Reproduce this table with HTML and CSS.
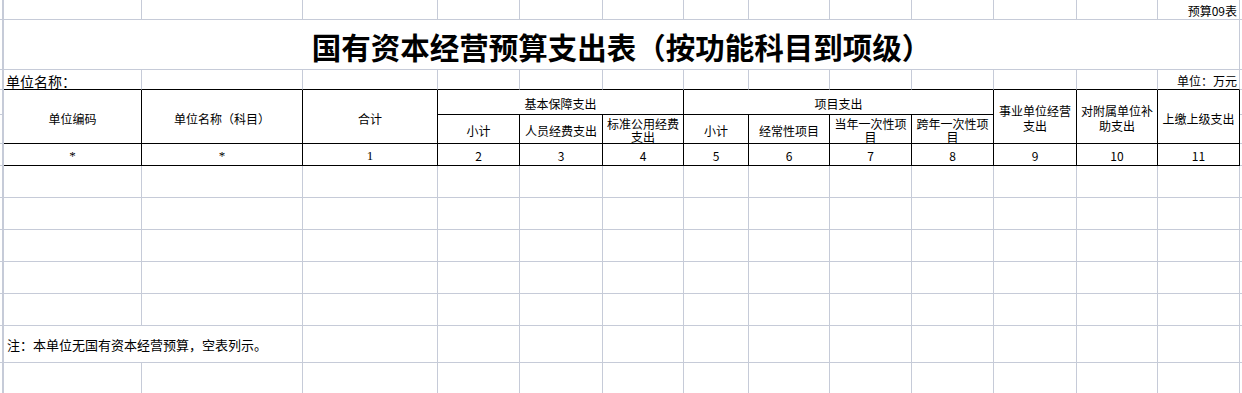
FILE: index.html
```html
<!DOCTYPE html>
<html lang="zh-CN">
<head>
<meta charset="utf-8">
<title>国有资本经营预算支出表（按功能科目到项级）</title>
<link rel="stylesheet" href="styles.css">
</head>
<body>
<div class="sheet">
  <!-- row 1 -->
  <div class="c e"></div>
  <div class="c"></div><div class="c"></div><div class="c"></div><div class="c"></div>
  <div class="c"></div><div class="c"></div><div class="c"></div><div class="c"></div>
  <div class="c"></div><div class="c"></div><div class="c"></div><div class="c"></div>
  <div class="c bot right">预算09表</div>
  <div class="c t"></div>

  <!-- row 2: title -->
  <div class="c e"></div>
  <div class="c title cs13">国有资本经营预算支出表（按功能科目到项级）</div>
  <div class="c t"></div>

  <!-- row 3 -->
  <div class="c e"></div>
  <div class="c ub bot left unitname">单位名称：</div>
  <div class="c ub"></div><div class="c ub"></div><div class="c ub"></div><div class="c ub"></div>
  <div class="c ub"></div><div class="c ub"></div><div class="c ub"></div><div class="c ub"></div>
  <div class="c ub"></div><div class="c ub"></div><div class="c ub"></div>
  <div class="c ub bot right">单位：万元</div>
  <div class="c t"></div>

  <!-- row 4: header A -->
  <div class="c e"></div>
  <div class="c h rs2">单位编码</div>
  <div class="c h rs2">单位名称（科目）</div>
  <div class="c h rs2">合计</div>
  <div class="c h cs3">基本保障支出</div>
  <div class="c h cs4">项目支出</div>
  <div class="c h rs2">事业单位经营支出</div>
  <div class="c h rs2">对附属单位补助支出</div>
  <div class="c h rs2">上缴上级支出</div>
  <div class="c t"></div>

  <!-- row 5: header B -->
  <div class="c e"></div>
  <div class="c h">小计</div>
  <div class="c h">人员经费支出</div>
  <div class="c h wrap2">标准公用经费支出</div>
  <div class="c h">小计</div>
  <div class="c h">经常性项目</div>
  <div class="c h wrap2">当年一次性项目</div>
  <div class="c h wrap2">跨年一次性项目</div>
  <div class="c t"></div>

  <!-- row 6: numbers -->
  <div class="c e"></div>
  <div class="c h n serif">*</div>
  <div class="c h n serif">*</div>
  <div class="c h n serif">1</div>
  <div class="c h n">2</div>
  <div class="c h n">3</div>
  <div class="c h n">4</div>
  <div class="c h n">5</div>
  <div class="c h n">6</div>
  <div class="c h n">7</div>
  <div class="c h n">8</div>
  <div class="c h n">9</div>
  <div class="c h n">10</div>
  <div class="c h n">11</div>
  <div class="c t"></div>

  <!-- rows 7-11: empty -->
  <div class="c e"></div>
  <div class="c"></div><div class="c"></div><div class="c"></div><div class="c"></div><div class="c"></div>
  <div class="c"></div><div class="c"></div><div class="c"></div><div class="c"></div><div class="c"></div>
  <div class="c"></div><div class="c"></div><div class="c"></div>
  <div class="c t"></div>

  <div class="c e"></div>
  <div class="c"></div><div class="c"></div><div class="c"></div><div class="c"></div><div class="c"></div>
  <div class="c"></div><div class="c"></div><div class="c"></div><div class="c"></div><div class="c"></div>
  <div class="c"></div><div class="c"></div><div class="c"></div>
  <div class="c t"></div>

  <div class="c e"></div>
  <div class="c"></div><div class="c"></div><div class="c"></div><div class="c"></div><div class="c"></div>
  <div class="c"></div><div class="c"></div><div class="c"></div><div class="c"></div><div class="c"></div>
  <div class="c"></div><div class="c"></div><div class="c"></div>
  <div class="c t"></div>

  <div class="c e"></div>
  <div class="c"></div><div class="c"></div><div class="c"></div><div class="c"></div><div class="c"></div>
  <div class="c"></div><div class="c"></div><div class="c"></div><div class="c"></div><div class="c"></div>
  <div class="c"></div><div class="c"></div><div class="c"></div>
  <div class="c t"></div>

  <div class="c e"></div>
  <div class="c"></div><div class="c"></div><div class="c"></div><div class="c"></div><div class="c"></div>
  <div class="c"></div><div class="c"></div><div class="c"></div><div class="c"></div><div class="c"></div>
  <div class="c"></div><div class="c"></div><div class="c"></div>
  <div class="c t"></div>

  <!-- row 12: note -->
  <div class="c e"></div>
  <div class="c cs2 left note">注：本单位无国有资本经营预算，空表列示。</div>
  <div class="c"></div><div class="c"></div><div class="c"></div><div class="c"></div><div class="c"></div>
  <div class="c"></div><div class="c"></div><div class="c"></div><div class="c"></div><div class="c"></div>
  <div class="c"></div>
  <div class="c t"></div>

  <!-- row 13 -->
  <div class="c e"></div>
  <div class="c"></div><div class="c"></div><div class="c"></div><div class="c"></div><div class="c"></div>
  <div class="c"></div><div class="c"></div><div class="c"></div><div class="c"></div><div class="c"></div>
  <div class="c"></div><div class="c"></div><div class="c"></div>
  <div class="c t"></div>
</div>
</body>
</html>
```

FILE: styles.css
```css
html, body {
  margin: 0;
  padding: 0;
  background: #ffffff;
  overflow: hidden;
}

body {
  width: 1242px;
  height: 393px;
  font-family: "Noto Sans CJK SC", "Noto Sans", sans-serif;
  color: #000000;
}

.sheet {
  display: grid;
  grid-template-columns: 4px 138px 161px 135px 82px 83px 81px 65px 81px 82px 82px 83px 81px 82px 2px;
  grid-template-rows: 20px 50px 20px 25px 29px 22px 32px 32px 32px 32px 32px 37px 32px;
  width: 1242px;
}

.c {
  box-sizing: border-box;
  border-right: 1px solid #c6cbd8;
  border-bottom: 1px solid #c6cbd8;
  display: flex;
  align-items: center;
  justify-content: center;
  text-align: center;
  overflow: hidden;
  font-size: 12px;
  line-height: 15px;
  white-space: normal;
  word-break: break-all;
}

.e {
  border-right: 2px solid #c6cbd8;
}

.t {
  border-right: none;
}

.cs2 { grid-column: span 2; }
.cs3 { grid-column: span 3; }
.cs4 { grid-column: span 4; }
.cs13 { grid-column: span 13; }
.rs2 { grid-row: span 2; }

.bot {
  align-items: flex-end;
  padding-bottom: 1px;
}

.right {
  justify-content: flex-end;
  padding-right: 2px;
}

.left {
  justify-content: flex-start;
  padding-left: 2px;
}

.ub {
  border-bottom: 1px solid #000000;
}

.unitname {
  font-size: 14px;
  line-height: 16px;
  padding-bottom: 0;
  padding-left: 2px;
}

.title {
  font-size: 29.5px;
  font-weight: 700;
  line-height: 32px;
  padding-top: 3px;
}

.h {
  border-right: 1px solid #000000;
  border-bottom: 1px solid #000000;
  padding-top: 3px;
}

.h.wrap2 {
  padding-top: 1px;
  line-height: 13px;
}

.n {
  padding-top: 1px;
}

.serif {
  font-family: "Liberation Serif", serif;
  font-size: 13px;
}

.note {
  font-size: 13px;
  padding-left: 3px;
  padding-top: 1px;
}
```
